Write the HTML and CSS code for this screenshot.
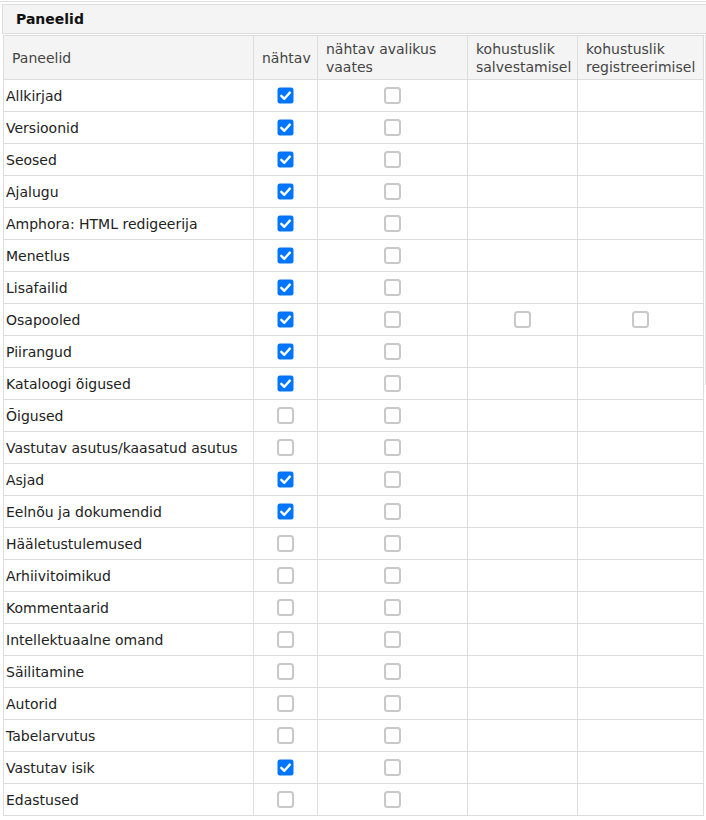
FILE: index.html
```html
<!DOCTYPE html>
<html lang="et">
<head>
<meta charset="utf-8">
<title>Paneelid</title>
<link rel="stylesheet" href="styles.css">
</head>
<body>
<div class="page">
  <div class="topline"></div>
  <div class="section-head">Paneelid</div>
  <div class="scroll-edge"></div>
  <table class="panels">
    <colgroup>
      <col class="c-name"><col class="c-vis"><col class="c-pub"><col class="c-save"><col class="c-reg">
    </colgroup>
    <thead>
      <tr>
        <th>Paneelid</th>
        <th>nähtav</th>
        <th>nähtav avalikus<br>vaates</th>
        <th>kohustuslik<br>salvestamisel</th>
        <th>kohustuslik<br>registreerimisel</th>
      </tr>
    </thead>
    <tbody id="rows"></tbody>
  </table>
</div>
<script src="app.js"></script>
</body>
</html>
```

FILE: styles.css
```css
* { box-sizing: border-box; }

html, body {
  margin: 0;
  padding: 0;
  background: #fff;
}

body {
  font-family: "DejaVu Sans", Verdana, sans-serif;
  font-size: 14px;
  color: #222;
}

.page {
  position: relative;
  width: 706px;
  overflow: hidden;
}

.topline {
  height: 2px;
  border-bottom: 1px solid #dedede;
  margin-bottom: 2px;
  width: 720px;
}

.section-head {
  margin-left: 2px;
  width: 720px;
  height: 30px;
  border: 1px solid #dddddd;
  background: #f4f4f4;
  padding: 0 13px;
  font-weight: bold;
  font-size: 14px;
  line-height: 28px;
  color: #111;
}

.scroll-edge {
  position: absolute;
  top: 35px;
  left: 705px;
  width: 1px;
  height: 350px;
  background: #e4e4e4;
}

.panels {
  margin: 1px 0 0 3px;
  border-collapse: collapse;
  table-layout: fixed;
  width: 700px;
}

.c-name { width: 250px; }
.c-vis { width: 64px; }
.c-pub { width: 150px; }
.c-save { width: 110px; }
.c-reg { width: 126px; }

.panels th,
.panels td {
  border: 1px solid #dddddd;
  vertical-align: middle;
}

.panels th {
  height: 44px;
  background: #f4f4f4;
  font-weight: normal;
  text-align: left;
  padding: 1px 0 0 8px;
  line-height: 18px;
  color: #444;
}

.panels td {
  height: 32px;
  padding: 1px 0 0 2px;
  line-height: 17px;
}

.panels td.box {
  text-align: center;
  padding: 0;
}

.cb {
  display: inline-block;
  width: 17px;
  height: 17px;
  vertical-align: middle;
}

.cb svg {
  display: block;
  width: 17px;
  height: 17px;
}
```

FILE: app.js
```js
// Panel list: [name, visible, mandatory boxes shown]
const panels = [
  ["Allkirjad", true],
  ["Versioonid", true],
  ["Seosed", true],
  ["Ajalugu", true],
  ["Amphora: HTML redigeerija", true],
  ["Menetlus", true],
  ["Lisafailid", true],
  ["Osapooled", true, true],
  ["Piirangud", true],
  ["Kataloogi õigused", true],
  ["Õigused", false],
  ["Vastutav asutus/kaasatud asutus", false],
  ["Asjad", true],
  ["Eelnõu ja dokumendid", true],
  ["Hääletustulemused", false],
  ["Arhiivitoimikud", false],
  ["Kommentaarid", false],
  ["Intellektuaalne omand", false],
  ["Säilitamine", false],
  ["Autorid", false],
  ["Tabelarvutus", false],
  ["Vastutav isik", true],
  ["Edastused", false]
];

const checked =
  '<span class="cb"><svg viewBox="0 0 17 17"><rect x="0.5" y="0.5" width="16" height="16" rx="2.5" fill="#0075ff"/>' +
  '<path d="M4.3 8.8 L7.3 11.8 L12.8 5.6" fill="none" stroke="#fff" stroke-width="2.4" stroke-linecap="round" stroke-linejoin="round"/></svg></span>';
const empty =
  '<span class="cb"><svg viewBox="0 0 17 17"><rect x="1" y="1" width="15" height="15" rx="2.5" fill="#fff" stroke="#c8c8c8" stroke-width="2"/></svg></span>';

const body = document.getElementById("rows");
body.innerHTML = panels.map(([name, vis, req]) =>
  "<tr>" +
  "<td>" + name + "</td>" +
  '<td class="box">' + (vis ? checked : empty) + "</td>" +
  '<td class="box">' + empty + "</td>" +
  '<td class="box">' + (req ? empty : "") + "</td>" +
  '<td class="box">' + (req ? empty : "") + "</td>" +
  "</tr>"
).join("");
```
